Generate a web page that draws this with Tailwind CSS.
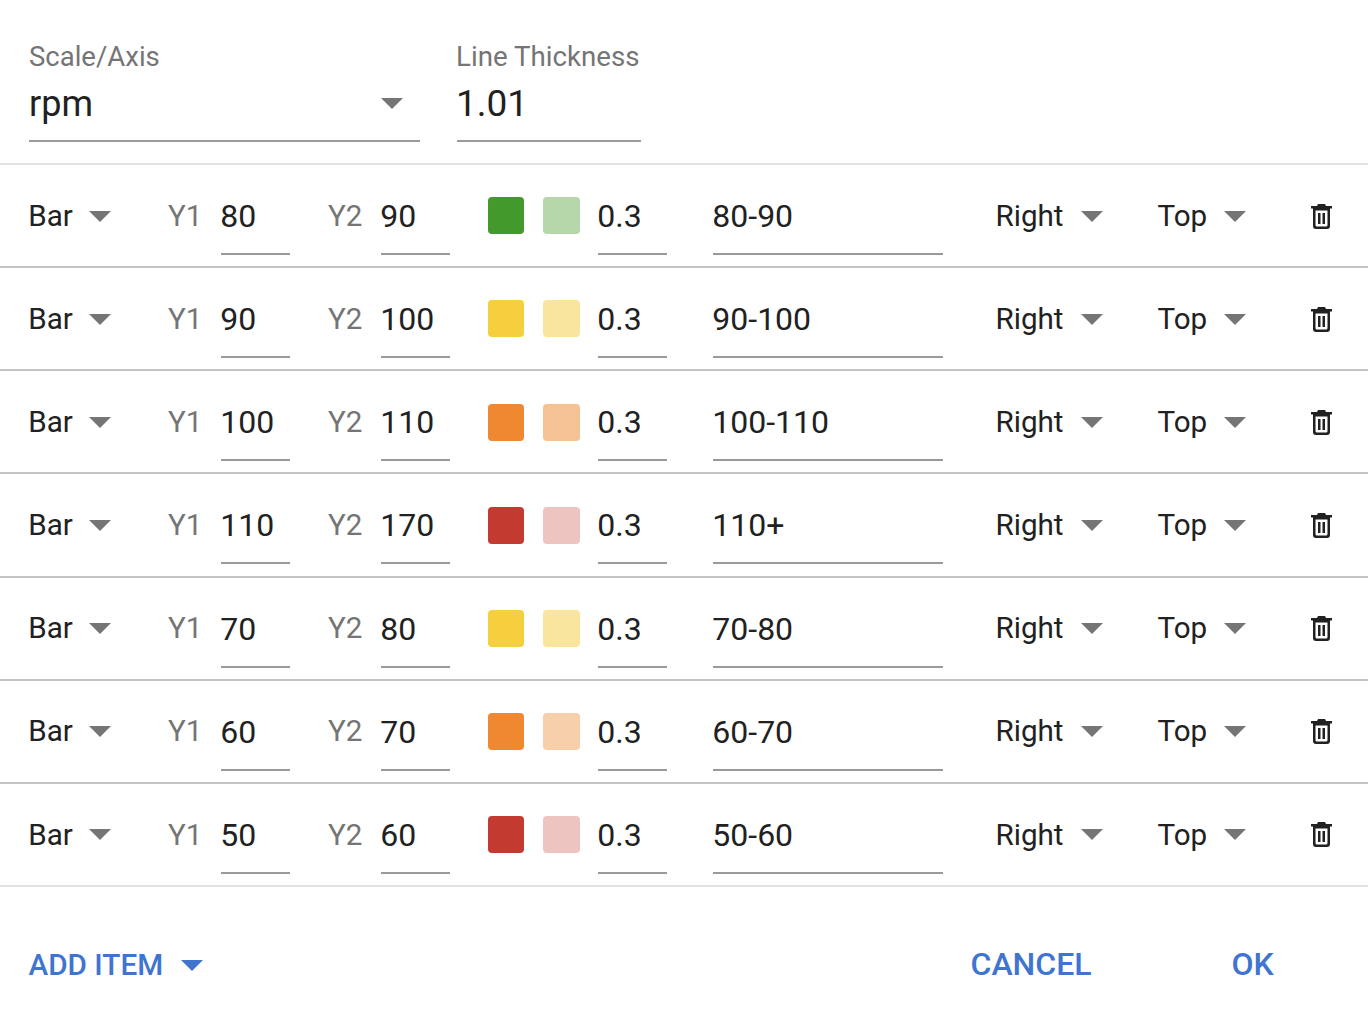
<!DOCTYPE html>
<html lang="en">
<head>
    <meta charset="UTF-8">
    <title>Thresholds</title>
    <script src="https://cdn.jsdelivr.net/npm/@tailwindcss/browser@4"></script>
    <meta name="viewport" content="width=device-width, initial-scale=1">
</head>
<body class="bg-white font-['Roboto',sans-serif] text-[#212121]">
<div class="w-[1368px] h-[1020px] overflow-hidden">
    <div class="h-[165px] pl-[29px] flex border-b-2 border-[#e2e2e2]">
        <div class="w-[391px] h-[142px] pt-[41px] border-b-2 border-[#9a9a9a]">
            <div class="text-[27.5px] leading-[32px] text-[#757575]">Scale/Axis</div>
            <div class="flex items-center justify-between pr-[17px] mt-[6px]">
                <span class="text-[36px] leading-[50px]">rpm</span>
                <svg class="-mt-[2px] -ml-[1px]" width="22" height="11" viewBox="0 0 22 11"><polygon points="0,0 22,0 11,11" fill="#757575"/></svg>
            </div>
        </div>
        <div class="w-[184px] h-[142px] ml-[37px] pt-[41px] border-b-2 border-[#9a9a9a]">
            <div class="text-[27.7px] leading-[32px] text-[#757575] -ml-[1px]">Line Thickness</div>
            <div class="text-[37px] leading-[50px] mt-[6px] -ml-[1px]">1.01</div>
        </div>
    </div>
    <div id="rows"></div>
    <div class="h-[133px] pl-[29px] pt-[23px] flex items-center">
        <span class="w-[152px] -ml-[0.5px] text-[29.7px] font-medium text-[#3f74d0] whitespace-nowrap">ADD ITEM</span>
        <svg class="mt-[2px]" width="22" height="11" viewBox="0 0 22 11"><polygon points="0,0 22,0 11,11" fill="#3f74d0"/></svg>
        <span class="ml-[768px] -mt-[2px] text-[32px] font-medium text-[#3f74d0] whitespace-nowrap">CANCEL</span>
        <span class="ml-[140px] -mt-[2px] text-[32px] font-medium text-[#3f74d0]">OK</span>
    </div>
</div>

<script>
    var rows = [
        ['80', '90', 'bg-[#43992c]', 'bg-[#b5d7a9]', '80-90', 'border-[#c4c4c4]'],
        ['90', '100', 'bg-[#f6cf3f]', 'bg-[#fae59e]', '90-100', 'border-[#c4c4c4]'],
        ['100', '110', 'bg-[#ef8830]', 'bg-[#f5c294]', '100-110', 'border-[#c4c4c4]'],
        ['110', '170', 'bg-[#c33b30]', 'bg-[#eec4c0]', '110+', 'border-[#c4c4c4]'],
        ['70', '80', 'bg-[#f6cf3f]', 'bg-[#fae59e]', '70-80', 'border-[#c4c4c4]'],
        ['60', '70', 'bg-[#ef8830]', 'bg-[#f7cfab]', '60-70', 'border-[#c4c4c4]'],
        ['50', '60', 'bg-[#c33b30]', 'bg-[#eec4c0]', '50-60', 'border-[#e2e2e2]']
    ];

    var caret = '<svg width="22" height="11" viewBox="0 0 22 11"><polygon points="0,0 22,0 11,11" fill="#757575"/></svg>';
    var trash = '<svg width="21" height="25" viewBox="0 0 21 25" fill="#212121"><path d="M7 0h7l1 2h6v2.500H0V2h6z"/><path d="M2 4h17v18a3 3 0 0 1-3 3H5a3 3 0 0 1-3-3zM4.500 6.500V21a1.500 1.500 0 0 0 1.500 1.500h9a1.500 1.500 0 0 0 1.500-1.500V6.500z" fill-rule="evenodd"/><rect x="7" y="9" width="2.500" height="11"/><rect x="11.500" y="9" width="2.500" height="11"/></svg>';

    function input(width, text) {
        return '<div class="' + width + ' h-[90px] pt-[14px] border-b-2 border-[#9a9a9a] flex items-center whitespace-nowrap text-[32px]"><span class="-ml-[0.7px]">' + text + '</span></div>';
    }

    document.getElementById('rows').innerHTML = rows.map(function (r) {
        return '<div class="h-[103.14px] pl-[29px] flex items-start text-[29.6px] border-b-2 ' + r[5] + '">'
            + '<div class="w-[139px] h-[90px] pt-[12px] flex items-center gap-[16px]"><span class="-ml-[0.7px]">Bar</span>' + caret + '</div>'
            + '<div class="w-[53px] h-[90px] pt-[12px] flex items-center text-[#757575]">Y1</div>'
            + input('w-[69px]', r[0])
            + '<div class="w-[53px] h-[90px] ml-[38px] pt-[12px] flex items-center text-[#757575]">Y2</div>'
            + input('w-[69px]', r[1])
            + '<div class="w-[36px] h-[37px] ml-[38px] mt-[32.3px] rounded-[4px] ' + r[2] + '"></div>'
            + '<div class="w-[37px] h-[37px] ml-[19px] mt-[32.3px] rounded-[4px] ' + r[3] + '"></div>'
            + '<div class="ml-[18px]">' + input('w-[69px]', '0.3') + '</div>'
            + '<div class="ml-[46px]">' + input('w-[230px]', r[4]) + '</div>'
            + '<div class="w-[162px] h-[90px] ml-[53px] pt-[12px] flex items-center gap-[17px]"><span class="-ml-[0.5px]">Right</span>' + caret + '</div>'
            + '<div class="w-[152px] h-[90px] pt-[12px] flex items-center gap-[17px]"><span class="-ml-[0.5px]">Top</span>' + caret + '</div>'
            + '<div class="h-[90px] pt-[12px] ml-[1px] flex items-center">' + trash + '</div>'
            + '</div>';
    }).join('');
</script>
</body>
</html>
